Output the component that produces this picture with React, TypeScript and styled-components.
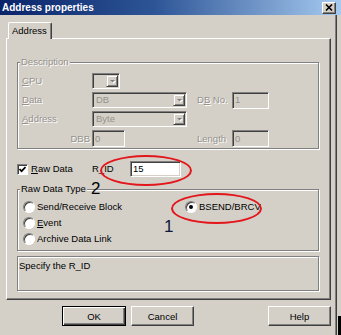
import React from "react";
import styled, { createGlobalStyle } from "styled-components";

const GlobalStyle = createGlobalStyle`
  html, body {
    margin: 0;
    padding: 0;
    background: #d4d0c8;
  }
  body {
    font-family: "Liberation Sans", Arial, sans-serif;
    font-size: 9.5px;
    color: #000;
  }
  * {
    box-sizing: border-box;
  }
`;

const DISABLED = "#95928c";

const Window = styled.div`
  position: relative;
  width: 341px;
  height: 335px;
  background: #d4d0c8;
  overflow: hidden;
`;

const TitleBar = styled.div`
  height: 15px;
  display: flex;
  align-items: center;
  justify-content: space-between;
  padding: 0 5px 0 2px;
  background: linear-gradient(to right, #0a246a 0%, #2d5596 45%, #a6caf0 100%);
  color: #fff;
  font-weight: bold;
  font-size: 10px;
`;

const CloseButton = styled.div`
  width: 14px;
  height: 12px;
  display: flex;
  align-items: center;
  justify-content: center;
  background: #d4d0c8;
  border: 1px solid;
  border-color: #fff #404040 #404040 #fff;
  box-shadow: inset -1px -1px 0 #808080;
`;

const Body = styled.div`
  width: 337px;
  height: 320px;
  padding: 7px 0 0 6px;
  border-right: 1px solid #404040;
  box-shadow: inset -1px 0 0 #808080;
`;

const TabStrip = styled.div`
  display: flex;
  height: 16px;
  padding-left: 2px;
`;

const Tab = styled.div`
  position: relative;
  z-index: 1;
  width: 44px;
  height: 17px;
  padding: 2px 0 0 3px;
  background: #d4d0c8;
  border-top: 1px solid #fff;
  border-left: 1px solid #fff;
  border-right: 1px solid #404040;
  box-shadow: inset -1px 0 0 #808080;
  border-radius: 2px 2px 0 0;
  line-height: 12px;
`;

const Panel = styled.div`
  width: 325px;
  height: 262px;
  padding: 23px 11px 0 10px;
  border: 1px solid;
  border-color: #fff #404040 #404040 #fff;
  box-shadow: inset -1px -1px 0 #808080;
`;

const Group = styled.div<{ $pad: string; $mt?: number; $h?: number }>`
  position: relative;
  margin-top: ${(p) => p.$mt ?? 0}px;
  height: ${(p) => (p.$h ? `${p.$h}px` : "auto")};
  padding: ${(p) => p.$pad};
  border: 1px solid #808080;
  box-shadow: inset 1px 1px 0 #fff, 1px 1px 0 #fff;
`;

const Caption = styled.span<{ $disabled?: boolean }>`
  position: absolute;
  top: -8px;
  left: 2px;
  padding: 0 1px;
  line-height: 13px;
  background: #d4d0c8;
  color: ${(p) => (p.$disabled ? DISABLED : "#000")};
  text-shadow: ${(p) => (p.$disabled ? "1px 1px 0 #fff" : "none")};
`;

const DescGrid = styled.div`
  display: grid;
  grid-template-columns: 70px 95px 45px 37px;
  grid-template-rows: 16px 16px 16px 17px;
  row-gap: 3px;
  align-items: center;
`;

const Label = styled.span<{ $disabled?: boolean; $right?: boolean; $pl?: number }>`
  line-height: 12px;
  padding-left: ${(p) => p.$pl ?? 0}px;
  padding-right: ${(p) => (p.$right ? 2 : 0)}px;
  text-align: ${(p) => (p.$right ? "right" : "left")};
  color: ${(p) => (p.$disabled ? DISABLED : "#000")};
  text-shadow: ${(p) => (p.$disabled ? "1px 1px 0 #fff" : "none")};
  white-space: nowrap;
`;

const Sunken = styled.div<{ $w: number; $h?: number; $enabled?: boolean }>`
  display: flex;
  align-items: center;
  width: ${(p) => p.$w}px;
  height: ${(p) => p.$h ?? 16}px;
  padding-left: 2px;
  border: 1px solid;
  border-color: #808080 #fff #fff #808080;
  box-shadow: inset 1px 1px 0 #404040, inset -1px -1px 0 #d4d0c8;
  background: ${(p) => (p.$enabled ? "#fff" : "#d4d0c8")};
  color: ${(p) => (p.$enabled ? "#000" : DISABLED)};
  line-height: 12px;
`;

const ComboText = styled.span`
  flex: 1;
  padding-left: 1px;
`;

const DropButton = styled.div`
  width: 12px;
  height: 12px;
  margin-right: 1px;
  display: flex;
  align-items: center;
  justify-content: center;
  background: #d4d0c8;
  border: 1px solid;
  border-color: #d4d0c8 #404040 #404040 #d4d0c8;
  box-shadow: inset 1px 1px 0 #fff, inset -1px -1px 0 #808080;
`;

const CheckRow = styled.div`
  display: flex;
  align-items: center;
  height: 16px;
  margin-top: 12px;
`;

const CheckItem = styled.div`
  display: flex;
  align-items: center;
  gap: 3px;
  width: 75px;
`;

const CheckBox = styled.div`
  width: 11px;
  height: 11px;
  display: flex;
  align-items: center;
  justify-content: center;
  background: #fff;
  border: 1px solid;
  border-color: #808080 #fff #fff #808080;
  box-shadow: inset 1px 1px 0 #404040;
`;

const RidLabel = styled.span`
  width: 38px;
  line-height: 12px;
`;

const RadioGrid = styled.div`
  display: grid;
  grid-template-columns: 162px auto;
  grid-template-rows: 16px 16px 16px;
  align-items: center;
`;

const RadioItem = styled.div`
  display: flex;
  align-items: center;
  gap: 2px;
  line-height: 12px;
  white-space: nowrap;
`;

const RadioCircle = styled.div<{ $on?: boolean }>`
  width: 12px;
  height: 12px;
  border-radius: 50%;
  display: flex;
  align-items: center;
  justify-content: center;
  background: #fff;
  border: 1px solid;
  border-color: #808080 #fff #fff #808080;
  box-shadow: inset 1px 1px 0 #404040;

  &::after {
    content: "";
    display: ${(p) => (p.$on ? "block" : "none")};
    width: 4px;
    height: 4px;
    border-radius: 50%;
    background: #000;
  }
`;

const StatusText = styled.div`
  line-height: 13px;
`;

const ButtonRow = styled.div`
  display: flex;
  gap: 5px;
  width: 325px;
  margin-top: 6px;
  padding-left: 56px;
`;

const Button = styled.div<{ $w: number; $default?: boolean; $push?: boolean }>`
  width: ${(p) => p.$w}px;
  height: 20px;
  margin-left: ${(p) => (p.$push ? "auto" : "0")};
  display: flex;
  align-items: center;
  justify-content: center;
  background: #d4d0c8;
  border: 1px solid;
  border-color: ${(p) => (p.$default ? "#000" : "#fff #404040 #404040 #fff")};
  box-shadow: ${(p) =>
    p.$default
      ? "inset 1px 1px 0 #fff, inset -1px -1px 0 #404040, inset -2px -2px 0 #808080"
      : "inset -1px -1px 0 #808080"};
`;

const Ellipse = styled.div<{ $x: number; $y: number; $w: number; $h: number }>`
  position: absolute;
  left: ${(p) => p.$x}px;
  top: ${(p) => p.$y}px;
  width: ${(p) => p.$w}px;
  height: ${(p) => p.$h}px;
  border: 2px solid #e3161b;
  border-radius: 50%;
  pointer-events: none;
`;

const Marker = styled.span<{ $x: number; $y: number; $color: string }>`
  position: absolute;
  left: ${(p) => p.$x}px;
  top: ${(p) => p.$y}px;
  font-size: 17px;
  line-height: 17px;
  color: ${(p) => p.$color};
`;

const CornerMark = styled.div`
  position: absolute;
  right: 0;
  bottom: 0;
  width: 3px;
  height: 19px;
  background: #000;
`;

function Arrow() {
  return (
    <svg width="7" height="5" viewBox="0 0 7 5">
      <polygon points="2,2 7,2 4.5,4.5" fill="#fff" />
      <polygon points="1,1 6,1 3.5,3.5" fill="#808080" />
    </svg>
  );
}

function Combo({ w, text }: { w: number; text?: string }) {
  return (
    <Sunken $w={w}>
      <ComboText>{text}</ComboText>
      <DropButton>
        <Arrow />
      </DropButton>
    </Sunken>
  );
}

function Radio({ on, children }: { on?: boolean; children: React.ReactNode }) {
  return (
    <RadioItem>
      <RadioCircle $on={on} />
      <span>{children}</span>
    </RadioItem>
  );
}

export default function App() {
  return (
    <Window>
      <GlobalStyle />
      <TitleBar>
        <span>Address properties</span>
        <CloseButton>
          <svg width="8" height="7" viewBox="0 0 8 7">
            <path d="M1 0.5 L7 6.5 M7 0.5 L1 6.5" stroke="#000" strokeWidth="1.6" />
          </svg>
        </CloseButton>
      </TitleBar>
      <Body>
        <TabStrip>
          <Tab>Address</Tab>
        </TabStrip>
        <Panel>
          <Group $pad="10px 0 1px 4px">
            <Caption $disabled>Description</Caption>
            <DescGrid>
              <Label $disabled>
                <u>C</u>PU
              </Label>
              <Combo w={28} />
              <span />
              <span />

              <Label $disabled>
                <u>D</u>ata
              </Label>
              <Combo w={95} text="DB" />
              <Label $disabled $pl={10}>
                D<u>B</u> No.
              </Label>
              <Sunken $w={37} $h={17}>1</Sunken>

              <Label $disabled>
                <u>A</u>ddress
              </Label>
              <Combo w={95} text="Byte" />
              <span />
              <span />

              <Label $disabled $right>
                DBB
              </Label>
              <Sunken $w={33} $h={17}>0</Sunken>
              <Label $disabled $pl={10}>
                Length
              </Label>
              <Sunken $w={37} $h={17}>0</Sunken>
            </DescGrid>
          </Group>

          <CheckRow>
            <CheckItem>
              <CheckBox>
                <svg width="7" height="7" viewBox="0 0 7 7">
                  <path d="M0.5 3 L2.6 5.2 L6.5 1" stroke="#000" strokeWidth="1.7" fill="none" />
                </svg>
              </CheckBox>
              <Label>
                <u>R</u>aw Data
              </Label>
            </CheckItem>
            <RidLabel>R_ID</RidLabel>
            <Sunken $w={51} $enabled>
              15
            </Sunken>
          </CheckRow>

          <Group $pad="9px 0 3px 5px" $mt={12}>
            <Caption>Raw Data Type</Caption>
            <RadioGrid>
              <Radio>Send/Receive Block</Radio>
              <Radio on>BSEND/BRCV</Radio>
              <Radio>
                <u>E</u>vent
              </Radio>
              <span />
              <Radio>Archive Data Link</Radio>
            </RadioGrid>
          </Group>

          <Group $pad="2px 1px" $mt={5} $h={35}>
            <StatusText>Specify the R_ID</StatusText>
          </Group>
        </Panel>

        <ButtonRow>
          <Button $w={64} $default>
            OK
          </Button>
          <Button $w={63}>Cancel</Button>
          <Button $w={63} $push>
            Help
          </Button>
        </ButtonRow>
      </Body>

      <Ellipse $x={100} $y={155} $w={92} $h={31} />
      <Ellipse $x={171} $y={193} $w={91} $h={31} />
      <Marker $x={91} $y={180} $color="#000">
        2
      </Marker>
      <Marker $x={164} $y={218} $color="#0b1a3c">
        1
      </Marker>
      <CornerMark />
    </Window>
  );
}
